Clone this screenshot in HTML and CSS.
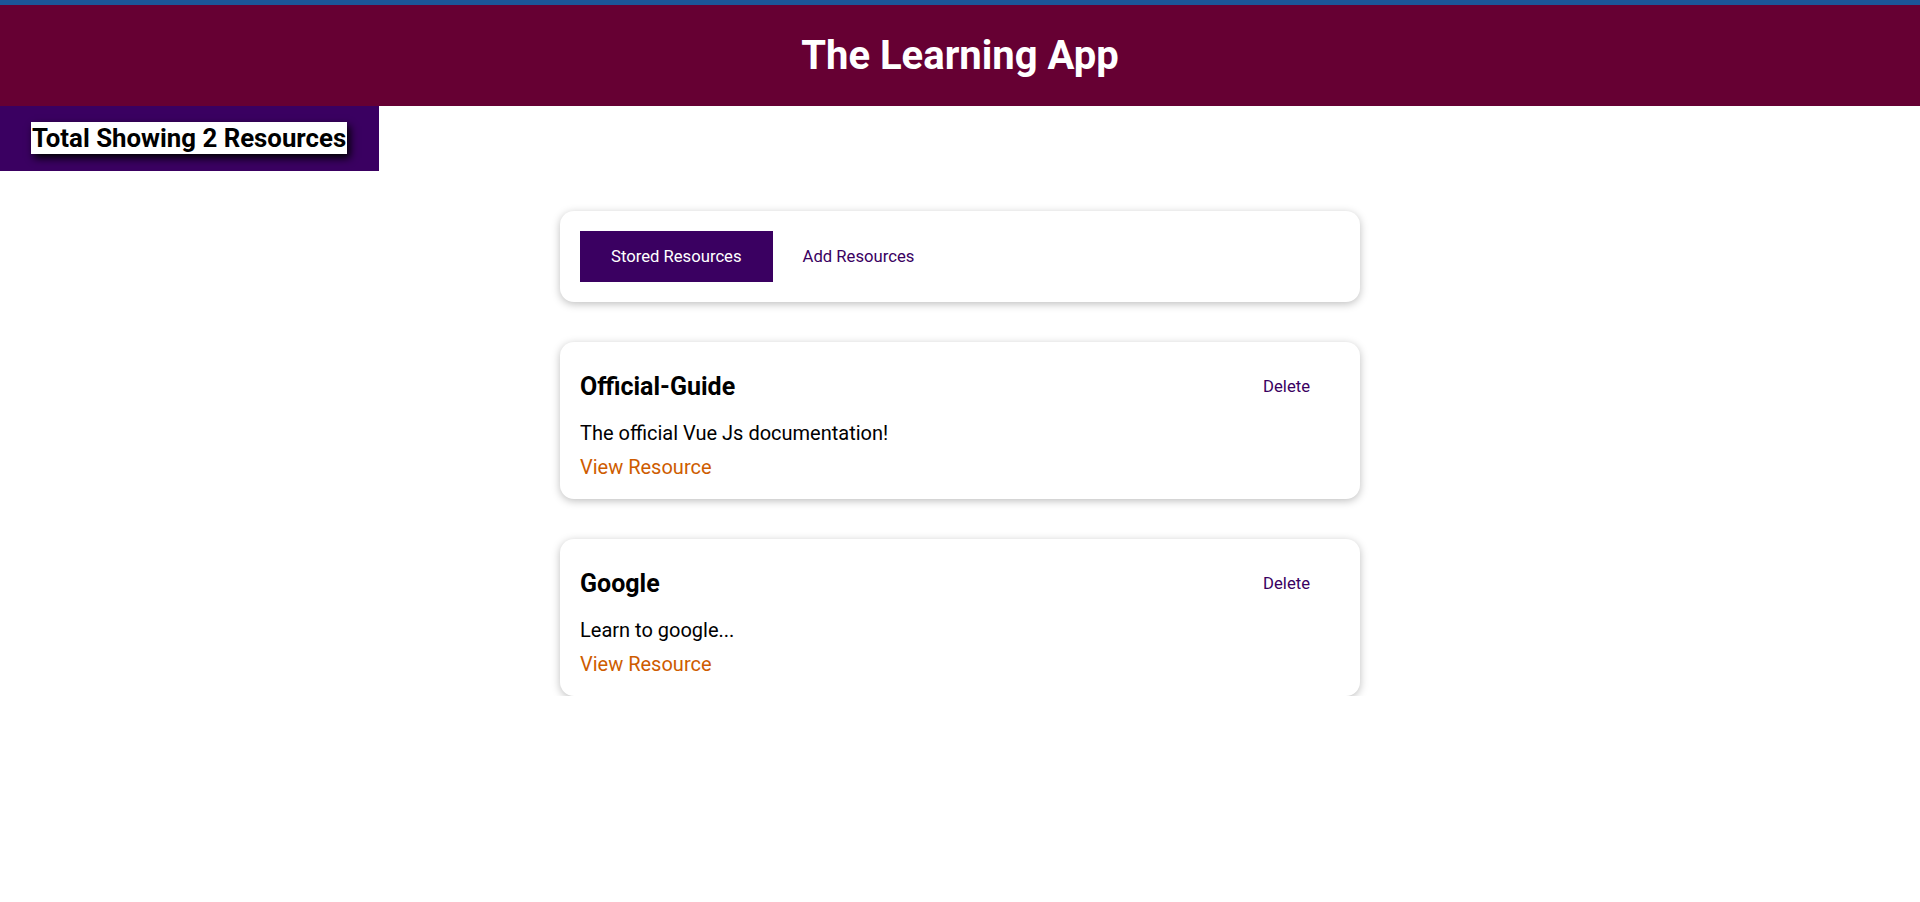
FILE: index.html
```html
<!DOCTYPE html>
<html lang="en">
<head>
<meta charset="utf-8">
<title>The Learning App</title>
<link rel="stylesheet" href="styles.css">
</head>
<body>
  <header class="app-header">
    <h1 class="app-title">The Learning App</h1>
  </header>
  <div class="total-bar">
    <h2 class="total-text">Total Showing 2 Resources</h2>
  </div>
  <main class="content">
    <section class="card tabs">
      <button class="btn btn-solid">Stored Resources</button>
      <button class="btn btn-flat">Add Resources</button>
    </section>
    <ul class="resource-list">
      <li class="card resource">
        <div class="resource-head">
          <h3 class="resource-title">Official-Guide</h3>
          <button class="btn btn-flat">Delete</button>
        </div>
        <p class="resource-desc">The official Vue Js documentation!</p>
        <nav><a class="resource-link" href="#">View Resource</a></nav>
      </li>
      <li class="card resource">
        <div class="resource-head">
          <h3 class="resource-title">Google</h3>
          <button class="btn btn-flat">Delete</button>
        </div>
        <p class="resource-desc">Learn to google...</p>
        <nav><a class="resource-link" href="#">View Resource</a></nav>
      </li>
    </ul>
  </main>
</body>
</html>
```
FILE: styles.css
```css
* { box-sizing: border-box; }

html, body {
  margin: 0;
  padding: 0;
  background: #ffffff;
  font-family: Roboto, "Liberation Sans", sans-serif;
  font-size: 20px;
  color: #000;
}

.app-header {
  border-top: 5px solid #1b5699;
  height: 106px;
  background: #660033;
  display: flex;
  align-items: center;
  justify-content: center;
}

.app-title {
  margin: 0;
  color: #fff;
  font-size: 40px;
  font-weight: 700;
  line-height: 1;
}

.total-bar {
  display: flex;
  width: 379px;
  background: #3a0061;
  padding: 16px 0 17px 31px;
}

.total-text {
  margin: 0;
  background: #fff;
  font-size: 25.8px;
  font-weight: 700;
  line-height: 32px;
  padding: 0 1px;
  box-shadow: 3px 4px 8px #000;
}

.content {
  display: flex;
  flex-direction: column;
  align-items: center;
  padding-top: 40px;
}

.card {
  width: 800px;
  background: #fff;
  border-radius: 14px;
  box-shadow: 0 2px 8px rgba(0, 0, 0, 0.26);
  padding: 20px;
}

.tabs {
  display: flex;
}

.btn {
  font-family: Roboto, "Liberation Sans", sans-serif;
  font-size: 16.67px;
  padding: 15px 30px;
  cursor: pointer;
  margin: 0;
}

.btn-solid {
  background: #3a0061;
  border: 1px solid #3a0061;
  color: #fff;
}

.btn-flat {
  background: transparent;
  border: none;
  color: #3a0061;
}

.resource-list {
  list-style: none;
  margin: 0;
  padding: 40px 0 0;
  display: flex;
  flex-direction: column;
  gap: 40px;
}

.resource-head {
  display: flex;
  justify-content: space-between;
  align-items: center;
}

.resource-title {
  margin: 10px 0;
  font-size: 25px;
  font-weight: 700;
}

.resource-desc {
  margin: 10px 0;
  font-size: 20px;
}

.resource-link {
  display: block;
  font-size: 20px;
  color: #ce5c00;
  text-decoration: none;
}
```
